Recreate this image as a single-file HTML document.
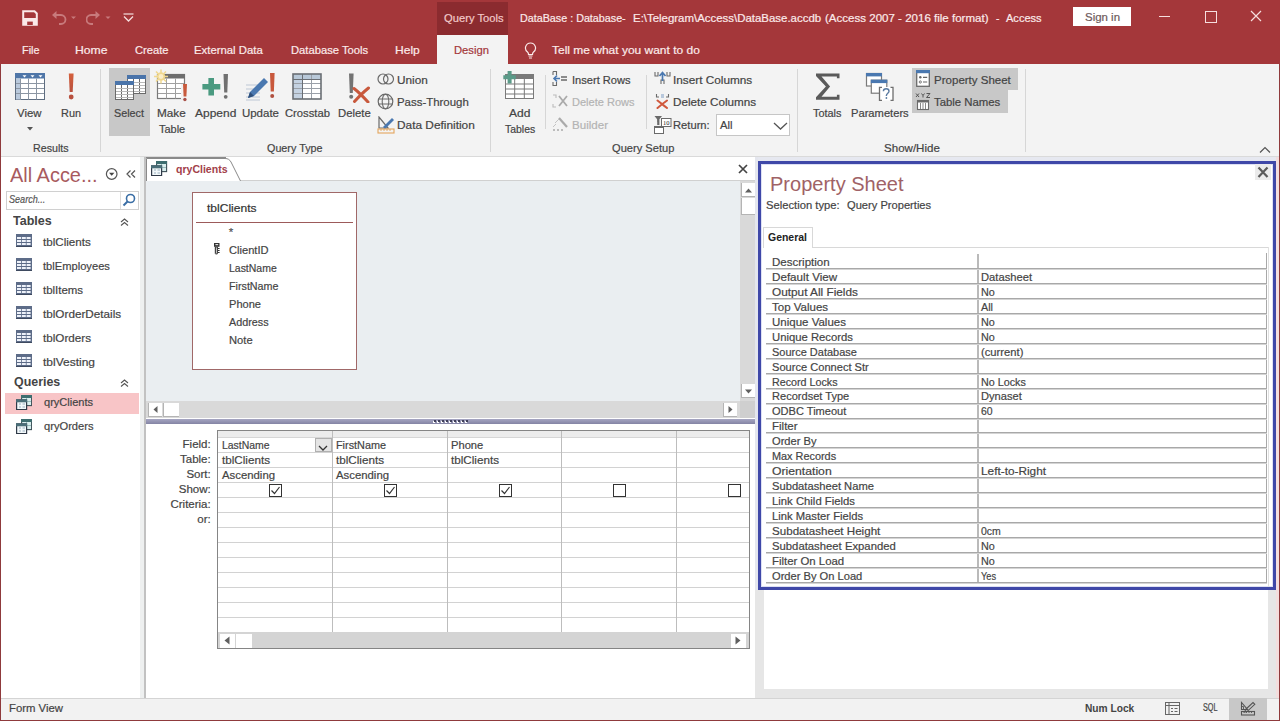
<!DOCTYPE html><html><head><meta charset="utf-8"><style>
html,body{margin:0;padding:0;}
body{width:1280px;height:721px;position:relative;overflow:hidden;background:#fff;font-family:"Liberation Sans",sans-serif;}
body>div,body>svg{position:absolute;}
body>div{-webkit-text-stroke:0.2px currentColor;}
</style></head><body>
<div style="left:0px;top:0px;width:1280px;height:64px;background:#a4373a;"></div>
<div style="left:437px;top:2px;width:71px;height:33px;background:#8b2b2f;"></div>
<svg style="left:22px;top:10px;" width="16" height="16" viewBox="0 0 16 16"><path d="M1.2 1.2h11.3l2.3 2.3v11.3h-13.6z" fill="none" stroke="#fbe9e9" stroke-width="2"/><rect x="1.5" y="8" width="13" height="2" fill="#fbe9e9"/><rect x="1.5" y="10" width="13" height="5" fill="#fbe9e9"/><rect x="5.2" y="11.6" width="5.6" height="3.4" fill="#a4373a"/></svg>
<svg style="left:51px;top:10px;" width="26" height="15" viewBox="0 0 26 15"><path d="M3 5h7a4.5 4.5 0 0 1 0 9h-2" fill="none" stroke="#c87a7c" stroke-width="1.8"/><path d="M1 5l4.5-4v8z" fill="#c87a7c"/><path d="M20 6.5h5l-2.5 2.5z" fill="#c87a7c"/></svg>
<svg style="left:86px;top:10px;" width="26" height="15" viewBox="0 0 26 15"><path d="M12 5h-7a4.5 4.5 0 0 0 0 9h2" fill="none" stroke="#c87a7c" stroke-width="1.8"/><path d="M14 5l-4.5-4v8z" fill="#c87a7c"/><path d="M19.5 6.5h5l-2.5 2.5z" fill="#c87a7c"/></svg>
<svg style="left:123px;top:13px;" width="11" height="9" viewBox="0 0 11 9"><path d="M0.5 1h10" stroke="#f6dede" stroke-width="1.2"/><path d="M1 3.5l4.5 4.5 4.5-4.5" fill="none" stroke="#f6dede" stroke-width="1.3"/></svg>
<div style="left:443.50px;top:10.72px;font-size:11.5px;line-height:14px;color:#f2c9c9;font-weight:normal;font-style:normal;white-space:nowrap;transform-origin:0 0;transform:scaleX(0.9731);">Query Tools</div>
<div style="left:520.20px;top:10.72px;font-size:11.5px;line-height:14px;color:#fbeaea;font-weight:normal;font-style:normal;white-space:nowrap;transform-origin:0 0;transform:scaleX(0.9342);">DataBase : Database-</div>
<div style="left:632.80px;top:10.72px;font-size:11.5px;line-height:14px;color:#fbeaea;font-weight:normal;font-style:normal;white-space:nowrap;transform-origin:0 0;transform:scaleX(0.9942);">E:\Telegram\Access\DataBase.accdb</div>
<div style="left:824.70px;top:10.72px;font-size:11.5px;line-height:14px;color:#fbeaea;font-weight:normal;font-style:normal;white-space:nowrap;transform-origin:0 0;transform:scaleX(1.0031);">(Access 2007 - 2016 file format)</div>
<div style="left:995.50px;top:10.72px;font-size:11.5px;line-height:14px;color:#fbeaea;font-weight:normal;font-style:normal;white-space:nowrap;transform-origin:0 0;transform:scaleX(0.8878);">-</div>
<div style="left:1006.20px;top:10.72px;font-size:11.5px;line-height:14px;color:#fbeaea;font-weight:normal;font-style:normal;white-space:nowrap;transform-origin:0 0;transform:scaleX(0.9605);">Access</div>
<div style="left:1073px;top:7px;width:58px;height:19px;background:#ffffff;"></div>
<div style="left:1085.00px;top:10.22px;font-size:11.5px;line-height:14px;color:#6e5a5a;font-weight:normal;font-style:normal;white-space:nowrap;transform-origin:0 0;transform:scaleX(0.9953);">Sign in</div>
<div style="left:1159px;top:16px;width:11px;height:1.2px;background:#f6dede;"></div>
<div style="left:1204.5px;top:10.5px;width:10px;height:10px;border:1px solid #f6dede;box-sizing:content-box"></div>
<svg style="left:1250px;top:10px;" width="12" height="12" viewBox="0 0 12 12"><path d="M1 1l10 10M11 1L1 11" stroke="#f6dede" stroke-width="1.2"/></svg>
<div style="left:21.50px;top:42.72px;font-size:11.5px;line-height:14px;color:#fbeaea;font-weight:normal;font-style:normal;white-space:nowrap;transform-origin:0 0;transform:scaleX(0.9446);">File</div>
<div style="left:74.50px;top:42.72px;font-size:11.5px;line-height:14px;color:#fbeaea;font-weight:normal;font-style:normal;white-space:nowrap;transform-origin:0 0;transform:scaleX(1.0593);">Home</div>
<div style="left:134.50px;top:42.72px;font-size:11.5px;line-height:14px;color:#fbeaea;font-weight:normal;font-style:normal;white-space:nowrap;transform-origin:0 0;transform:scaleX(0.9707);">Create</div>
<div style="left:194.20px;top:42.72px;font-size:11.5px;line-height:14px;color:#fbeaea;font-weight:normal;font-style:normal;white-space:nowrap;transform-origin:0 0;transform:scaleX(0.9860);">External Data</div>
<div style="left:290.70px;top:42.72px;font-size:11.5px;line-height:14px;color:#fbeaea;font-weight:normal;font-style:normal;white-space:nowrap;transform-origin:0 0;transform:scaleX(0.9764);">Database Tools</div>
<div style="left:395.00px;top:42.72px;font-size:11.5px;line-height:14px;color:#fbeaea;font-weight:normal;font-style:normal;white-space:nowrap;transform-origin:0 0;transform:scaleX(1.0484);">Help</div>
<div style="left:437px;top:35px;width:71px;height:30px;background:#f3f3f3;"></div>
<div style="left:454.00px;top:42.72px;font-size:11.5px;line-height:14px;color:#a4373a;font-weight:normal;font-style:normal;white-space:nowrap;transform-origin:0 0;transform:scaleX(0.9777);">Design</div>
<svg style="left:524px;top:42px;" width="13" height="17" viewBox="0 0 13 17"><path d="M6.5 1a5 5 0 0 0-3 9c.8.7 1 1.5 1 2.5h4c0-1 .2-1.8 1-2.5a5 5 0 0 0-3-9z" fill="none" stroke="#fbeaea" stroke-width="1.2"/><path d="M4.5 14h4M5 16h3" stroke="#fbeaea" stroke-width="1.1"/></svg>
<div style="left:551.60px;top:42.72px;font-size:11.5px;line-height:14px;color:#fbeaea;font-weight:normal;font-style:normal;white-space:nowrap;transform-origin:0 0;transform:scaleX(1.0415);">Tell me what you want to do</div>
<div style="left:0px;top:64px;width:1280px;height:93px;background:#f3f3f3;"></div>
<div style="left:0px;top:156px;width:1280px;height:1px;background:#dadada;"></div>
<svg style="left:15px;top:73px;" width="30" height="27" viewBox="0 0 30 27"><rect x="0.5" y="0.5" width="29" height="26" fill="#fff" stroke="#5e6d80" stroke-width="1"/><rect x="0" y="0" width="30" height="5.5" fill="#4f76a8"/><rect x="1" y="5.5" width="5" height="21" fill="#b9c9dc"/><path d="M5.5 5.5v21M13.5 5.5v21M21.5 5.5v21M1 10.5h28M1 15.5h28M1 20.5h28" stroke="#8c96a3" stroke-width="1"/><path d="M7.5 2.3h4l-2 2.2zM15.5 2.3h4l-2 2.2zM23.5 2.3h4l-2 2.2z" fill="#fff"/></svg>
<div style="left:17.00px;top:105.72px;font-size:11.5px;line-height:14px;color:#444444;font-weight:normal;font-style:normal;white-space:nowrap;transform-origin:0 0;transform:scaleX(0.9900);">View</div>
<svg style="left:27px;top:127px;" width="6" height="4" viewBox="0 0 6 4"><path d="M0 0h6l-3 3.5z" fill="#555"/></svg>
<svg style="left:67px;top:73px;" width="8" height="27" viewBox="0 0 8 27"><defs><linearGradient id="rg" x1="0" y1="0" x2="0" y2="1"><stop offset="0" stop-color="#d4603c"/><stop offset="1" stop-color="#b8503e"/></linearGradient></defs><path d="M1.8 0.5h4.8l-0.9 18.5h-3z" fill="url(#rg)"/><circle cx="4.2" cy="24" r="2.4" fill="#b8503e"/></svg>
<div style="left:61.20px;top:105.72px;font-size:11.5px;line-height:14px;color:#444444;font-weight:normal;font-style:normal;white-space:nowrap;transform-origin:0 0;transform:scaleX(0.9483);">Run</div>
<div style="left:32.60px;top:140.72px;font-size:11.5px;line-height:14px;color:#444444;font-weight:normal;font-style:normal;white-space:nowrap;transform-origin:0 0;transform:scaleX(0.9285);">Results</div>
<div style="left:100px;top:69px;width:1px;height:83px;background:#d6d6d6;"></div>
<div style="left:109px;top:68px;width:41px;height:68px;background:#c8c8c8;"></div>
<svg style="left:127px;top:75px;" width="19" height="19" viewBox="0 0 19 19"><rect x="0.5" y="0.5" width="18" height="18" fill="#fff" stroke="#6a6a6a" stroke-width="1"/><rect x="0" y="0" width="19" height="4" fill="#4a74aa"/><path d="M6.5 4v14M12.5 4v14" stroke="#6a6a6a" stroke-width="1"/><path d="M1 7.5h17M1 10.5h17M1 13.5h17M1 16.5h17" stroke="#b8b8b8" stroke-width="1"/></svg>
<svg style="left:115px;top:81px;" width="19" height="19" viewBox="0 0 19 19"><rect x="0.5" y="0.5" width="18" height="18" fill="#fff" stroke="#6a6a6a" stroke-width="1"/><rect x="0" y="0" width="19" height="4" fill="#4a74aa"/><path d="M6.5 4v14M12.5 4v14" stroke="#6a6a6a" stroke-width="1"/><path d="M1 7.5h17M1 10.5h17M1 13.5h17M1 16.5h17" stroke="#b8b8b8" stroke-width="1"/></svg>
<div style="left:113.80px;top:105.72px;font-size:11.5px;line-height:14px;color:#444444;font-weight:normal;font-style:normal;white-space:nowrap;transform-origin:0 0;transform:scaleX(0.9387);">Select</div>
<svg style="left:152px;top:68px;" width="38" height="36" viewBox="0 0 38 36"><rect x="5.5" y="6.5" width="27" height="24" fill="#fff" stroke="#7a7a7a" stroke-width="1.2"/><rect x="5" y="6" width="28" height="4.5" fill="#6e6e6e"/><path d="M14.5 10.5v20M23.5 10.5v20M6 15.5h26M6 20.5h26M6 25.5h26" stroke="#a0a0a0" stroke-width="1"/><g fill="#f0d890"><circle cx="9" cy="8.5" r="4.2"/></g><path d="M9 1.5v14M2 8.5h14M4 3.5l10 10M14 3.5l-10 10" stroke="#f0d890" stroke-width="1.5"/><circle cx="9" cy="8.5" r="2.4" fill="#fbeec8"/><rect x="29" y="16" width="8" height="15" fill="#f3f3f3"/><path d="M31 16h4l-0.6 12.5h-2.8z" fill="#c85a3c"/><circle cx="32.9" cy="31.5" r="1.7" fill="#a85048"/></svg>
<div style="left:157.00px;top:105.72px;font-size:11.5px;line-height:14px;color:#444444;font-weight:normal;font-style:normal;white-space:nowrap;transform-origin:0 0;transform:scaleX(1.0207);">Make</div>
<div style="left:158.70px;top:121.72px;font-size:11.5px;line-height:14px;color:#444444;font-weight:normal;font-style:normal;white-space:nowrap;transform-origin:0 0;transform:scaleX(0.9528);">Table</div>
<svg style="left:200px;top:72px;" width="30" height="29" viewBox="0 0 30 29"><path d="M8.4 6h5.6v5.9h6.3v5.7h-6.3v5.9h-5.6v-5.9h-6v-5.7h6z" fill="#4a9a80"/><path d="M23.5 2h4.5l-0.7 18.5h-3.1z" fill="#707070"/><circle cx="25.7" cy="24.8" r="1.9" fill="#707070"/></svg>
<div style="left:194.60px;top:105.72px;font-size:11.5px;line-height:14px;color:#444444;font-weight:normal;font-style:normal;white-space:nowrap;transform-origin:0 0;transform:scaleX(1.0416);">Append</div>
<svg style="left:245px;top:72px;" width="32" height="30" viewBox="0 0 32 30"><path d="M1 13h14M1 17h14M1 21h14M1 25h14M1 28h14" stroke="#cfd6df" stroke-width="1.3"/><path d="M3 26l2-6 14-14 4 4-14 14z" fill="#4a78b0"/><path d="M3 26l2-6 4 4z" fill="#2e4f7a"/><path d="M25 1h4.6l-0.7 18.5h-3.2z" fill="#c8583c"/><circle cx="27.2" cy="24" r="2" fill="#b05040"/></svg>
<div style="left:241.90px;top:105.72px;font-size:11.5px;line-height:14px;color:#444444;font-weight:normal;font-style:normal;white-space:nowrap;transform-origin:0 0;">Update</div>
<svg style="left:292px;top:73px;" width="30" height="27" viewBox="0 0 30 27"><rect x="1.5" y="1.5" width="27" height="24" fill="#fff"/><rect x="1" y="1" width="28" height="5" fill="#b8c8d8"/><rect x="1" y="6" width="9.5" height="20" fill="#c4d2e2"/><path d="M10.5 1v25M19.5 1v25M1 10.5h28M1 15.5h28M1 20.5h28" stroke="#9aa0a8" stroke-width="1"/><path d="M1 6.5h28M10.5 1v25" stroke="#6a6e74" stroke-width="1"/><rect x="1" y="1" width="28" height="25" fill="none" stroke="#6a6e74" stroke-width="1.6"/></svg>
<div style="left:284.70px;top:105.72px;font-size:11.5px;line-height:14px;color:#444444;font-weight:normal;font-style:normal;white-space:nowrap;transform-origin:0 0;transform:scaleX(0.9780);">Crosstab</div>
<svg style="left:347px;top:72px;" width="24" height="31" viewBox="0 0 24 31"><path d="M2 1.5h4.6l-0.8 19.5h-3z" fill="#737373"/><circle cx="4.2" cy="24.8" r="2" fill="#737373"/><path d="M7 16.5c4 3 8 7 14 13.5M21.5 16c-5 4-9 8-14 13.5" stroke="#c8583c" stroke-width="3" stroke-linecap="round" fill="none"/></svg>
<div style="left:337.50px;top:105.72px;font-size:11.5px;line-height:14px;color:#444444;font-weight:normal;font-style:normal;white-space:nowrap;transform-origin:0 0;transform:scaleX(0.9866);">Delete</div>
<svg style="left:377px;top:73px;" width="18" height="12" viewBox="0 0 18 12"><circle cx="6" cy="6" r="5" fill="none" stroke="#6a6a6a" stroke-width="1.2"/><circle cx="11.5" cy="6" r="5" fill="none" stroke="#6a6a6a" stroke-width="1.2"/></svg>
<div style="left:397.20px;top:72.72px;font-size:11.5px;line-height:14px;color:#444444;font-weight:normal;font-style:normal;white-space:nowrap;transform-origin:0 0;transform:scaleX(1.0250);">Union</div>
<svg style="left:377px;top:93px;" width="17" height="17" viewBox="0 0 17 17"><circle cx="8.5" cy="8.5" r="7.3" fill="none" stroke="#6a6a6a" stroke-width="1.2"/><ellipse cx="8.5" cy="8.5" rx="3.3" ry="7.3" fill="none" stroke="#6a6a6a" stroke-width="1.1"/><path d="M1.5 6h14M1.5 11h14" stroke="#6a6a6a" stroke-width="1.1"/></svg>
<div style="left:397.20px;top:95.22px;font-size:11.5px;line-height:14px;color:#444444;font-weight:normal;font-style:normal;white-space:nowrap;transform-origin:0 0;transform:scaleX(0.9940);">Pass-Through</div>
<svg style="left:377px;top:116px;" width="18" height="18" viewBox="0 0 18 18"><path d="M2 1v11h9z" fill="none" stroke="#6a6a6a" stroke-width="1.2"/><path d="M6 11l9-9 2 2-9 9z" fill="#4a78b0"/><rect x="1" y="13" width="16" height="4" fill="none" stroke="#e3a55c" stroke-width="1.1"/><path d="M4 13v2M7 13v2M10 13v2M13 13v2" stroke="#e3a55c" stroke-width="0.9"/></svg>
<div style="left:397.20px;top:117.72px;font-size:11.5px;line-height:14px;color:#444444;font-weight:normal;font-style:normal;white-space:nowrap;transform-origin:0 0;transform:scaleX(1.0314);">Data Definition</div>
<div style="left:267.20px;top:140.72px;font-size:11.5px;line-height:14px;color:#444444;font-weight:normal;font-style:normal;white-space:nowrap;transform-origin:0 0;transform:scaleX(0.9369);">Query Type</div>
<div style="left:490px;top:69px;width:1px;height:83px;background:#d6d6d6;"></div>
<svg style="left:503px;top:70px;" width="31" height="29" viewBox="0 0 31 29"><g transform="translate(2,4)"><rect x="0.5" y="0.5" width="28" height="24" fill="#ffffff" stroke="#7a7a7a" stroke-width="1"/><rect x="0" y="0" width="29" height="5" fill="#7a7a7a"/><rect x="0" y="9.50" width="29" height="1" fill="#7a7a7a"/><rect x="0" y="14.50" width="29" height="1" fill="#7a7a7a"/><rect x="0" y="19.50" width="29" height="1" fill="#7a7a7a"/><rect x="9.17" y="5" width="1" height="20" fill="#7a7a7a"/><rect x="18.83" y="5" width="1" height="20" fill="#7a7a7a"/></g><path d="M4.6 1h4v4.3h4.2v4h-4.2v4.2h-4v-4.2h-4.3v-4h4.3z" fill="#5a9a88"/></svg>
<div style="left:508.60px;top:105.72px;font-size:11.5px;line-height:14px;color:#444444;font-weight:normal;font-style:normal;white-space:nowrap;transform-origin:0 0;transform:scaleX(1.0460);">Add</div>
<div style="left:504.60px;top:121.72px;font-size:11.5px;line-height:14px;color:#444444;font-weight:normal;font-style:normal;white-space:nowrap;transform-origin:0 0;transform:scaleX(0.9084);">Tables</div>
<div style="left:545px;top:75px;width:1px;height:54px;background:#d6d6d6;"></div>
<svg style="left:552px;top:70px;" width="16" height="17" viewBox="0 0 16 17"><path d="M1 1.5h3.5v3.5M1 1.5v3.5" fill="none" stroke="#6a6a6a" stroke-width="1.1"/><path d="M1 12v3.5h3.5v-3.5" fill="none" stroke="#6a6a6a" stroke-width="1.1"/><path d="M9 7h6M9 10h6" stroke="#6a6a6a" stroke-width="1.5"/><path d="M2 8.5h6M5 5.5l-3 3 3 3" fill="none" stroke="#4a78b0" stroke-width="1.6"/></svg>
<div style="left:571.80px;top:72.72px;font-size:11.5px;line-height:14px;color:#444444;font-weight:normal;font-style:normal;white-space:nowrap;transform-origin:0 0;transform:scaleX(0.9653);">Insert Rows</div>
<svg style="left:552px;top:93px;" width="16" height="16" viewBox="0 0 16 16"><path d="M1 2h3v3M1 11v3h3" fill="none" stroke="#bbb" stroke-width="1.1"/><path d="M7 3l8 10M15 3L7 13" stroke="#aaa" stroke-width="1.8"/></svg>
<div style="left:571.80px;top:95.22px;font-size:11.5px;line-height:14px;color:#b4b4b4;font-weight:normal;font-style:normal;white-space:nowrap;transform-origin:0 0;transform:scaleX(0.9602);">Delete Rows</div>
<svg style="left:552px;top:116px;" width="16" height="16" viewBox="0 0 16 16"><path d="M7 2l8 9" stroke="#aaa" stroke-width="2.2"/><path d="M3 7l4-4M1 11l3-3" stroke="#c4c4c4" stroke-width="1"/><path d="M1 14h2M5 14h2M9 14h2" stroke="#aaa" stroke-width="1.6"/></svg>
<div style="left:571.80px;top:117.72px;font-size:11.5px;line-height:14px;color:#b4b4b4;font-weight:normal;font-style:normal;white-space:nowrap;transform-origin:0 0;transform:scaleX(1.0056);">Builder</div>
<div style="left:646px;top:75px;width:1px;height:54px;background:#d6d6d6;"></div>
<svg style="left:654px;top:71px;" width="17" height="14" viewBox="0 0 17 14"><path d="M1 1v4h3v-4M13 1v4h3v-4" fill="none" stroke="#6a6a6a" stroke-width="1.1"/><path d="M7 13v-4h3v4" fill="none" stroke="#6a6a6a" stroke-width="1.1"/><path d="M8.5 10v-8M5.5 5l3-3.5 3 3.5" fill="none" stroke="#4a78b0" stroke-width="1.7"/></svg>
<div style="left:673.30px;top:72.72px;font-size:11.5px;line-height:14px;color:#444444;font-weight:normal;font-style:normal;white-space:nowrap;transform-origin:0 0;transform:scaleX(1.0241);">Insert Columns</div>
<svg style="left:654px;top:93px;" width="17" height="16" viewBox="0 0 17 16"><path d="M2.5 1v3h2.5M12 4h2.5v-3" fill="none" stroke="#6a6a6a" stroke-width="1.1"/><rect x="7" y="1" width="3" height="4" fill="#b8c8dc"/><path d="M3.5 7.5c3 2.3 6 4.8 9.5 7.5M13 7.5c-3.5 2.5-6.5 5-9.5 7.5" stroke="#d0583c" stroke-width="2" stroke-linecap="round" fill="none"/></svg>
<div style="left:673.30px;top:95.22px;font-size:11.5px;line-height:14px;color:#444444;font-weight:normal;font-style:normal;white-space:nowrap;transform-origin:0 0;transform:scaleX(1.0170);">Delete Columns</div>
<svg style="left:653px;top:115px;" width="19" height="19" viewBox="0 0 19 19"><path d="M1.5 1h7.5l-2.6 3.2v2.8h-2.3v-2.8z" fill="#6a6a6a"/><rect x="4.2" y="7" width="2.2" height="3" fill="#6a6a6a"/><rect x="8.5" y="3.5" width="9.5" height="8" fill="#fff" stroke="#6a6a6a" stroke-width="1"/><text x="13.3" y="10" font-size="6.5" font-family="Liberation Serif" text-anchor="middle" fill="#222">10</text><rect x="1.5" y="11.5" width="9" height="7" fill="#fff" stroke="#6a6a6a" stroke-width="1"/><rect x="1" y="11" width="10" height="2" fill="#6a6a6a"/></svg>
<div style="left:673.30px;top:117.72px;font-size:11.5px;line-height:14px;color:#444444;font-weight:normal;font-style:normal;white-space:nowrap;transform-origin:0 0;transform:scaleX(0.9733);">Return:</div>
<div style="left:716px;top:113.5px;width:74px;height:22px;background:#fff;border:1px solid #c6c6c6;box-sizing:border-box"></div>
<div style="left:719.50px;top:117.72px;font-size:11.5px;line-height:14px;color:#444444;font-weight:normal;font-style:normal;white-space:nowrap;transform-origin:0 0;transform:scaleX(0.9784);">All</div>
<svg style="left:773px;top:122px;" width="15" height="8" viewBox="0 0 15 8"><path d="M1 1l6.5 6 6.5-6" fill="none" stroke="#555" stroke-width="1.3"/></svg>
<div style="left:612.00px;top:140.72px;font-size:11.5px;line-height:14px;color:#444444;font-weight:normal;font-style:normal;white-space:nowrap;transform-origin:0 0;transform:scaleX(0.9650);">Query Setup</div>
<div style="left:797px;top:69px;width:1px;height:83px;background:#d6d6d6;"></div>
<svg style="left:815px;top:73px;" width="26" height="27" viewBox="0 0 26 27"><path d="M1 0.5h23.5v4.8h-2.6v-1.8h-15.4l8.6 10-8.6 10.3h15.4v-2h2.6v5h-23.5v-2.6l9.9-10.7-9.9-10.6z" fill="#5a5a5a"/></svg>
<div style="left:813.40px;top:105.72px;font-size:11.5px;line-height:14px;color:#444444;font-weight:normal;font-style:normal;white-space:nowrap;transform-origin:0 0;transform:scaleX(0.9488);">Totals</div>
<svg style="left:864px;top:71px;" width="31" height="31" viewBox="0 0 31 31"><rect x="2.5" y="2.5" width="15" height="12.5" fill="#fff" stroke="#7a7a7a" stroke-width="1.2"/><rect x="2" y="2" width="16" height="3.4" fill="#4a78b0"/><rect x="7.3" y="9.2" width="15.5" height="13" fill="#fff" stroke="#7a7a7a" stroke-width="1.2"/><rect x="6.8" y="8.7" width="16.5" height="3.4" fill="#4a78b0"/><rect x="15" y="16" width="14" height="13.5" fill="#fff"/><path d="M18 16.3h-2.5v13h2.5M26.5 16.3h2.5v13h-2.5" fill="none" stroke="#6e6e6e" stroke-width="1.3"/><path d="M19.4 20.3c0-1.6 1.2-2.5 2.8-2.5s2.8 1 2.8 2.5c0 1.8-2.6 2.2-2.6 4.2v0.6" fill="none" stroke="#5a7aa0" stroke-width="1.4"/><circle cx="22.4" cy="27" r="0.9" fill="#5a7aa0"/></svg>
<div style="left:850.90px;top:105.72px;font-size:11.5px;line-height:14px;color:#444444;font-weight:normal;font-style:normal;white-space:nowrap;transform-origin:0 0;transform:scaleX(0.9707);">Parameters</div>
<div style="left:912px;top:68px;width:106px;height:22px;background:#c8c8c8;"></div>
<div style="left:912px;top:90px;width:96px;height:23px;background:#c8c8c8;"></div>
<svg style="left:916px;top:70px;" width="14" height="17" viewBox="0 0 14 17"><rect x="0.7" y="0.7" width="12.6" height="15.6" fill="#fff" stroke="#6a6a6a" stroke-width="1.3"/><rect x="0" y="0" width="14" height="3.2" fill="#4a78b0"/><circle cx="4.3" cy="7.3" r="1.2" fill="#666"/><circle cx="4.3" cy="12" r="1.1" fill="none" stroke="#666" stroke-width="0.9"/><path d="M7 7.3h4.2M7 12h4.2" stroke="#666" stroke-width="1.2"/></svg>
<div style="left:934.10px;top:72.72px;font-size:11.5px;line-height:14px;color:#444444;font-weight:normal;font-style:normal;white-space:nowrap;transform-origin:0 0;">Property Sheet</div>
<svg style="left:915px;top:92px;" width="16" height="19" viewBox="0 0 16 19"><path d="M1 1.5l3 3.5M4 1.5l-3 3.5M6.5 1.5l1.5 2 1.5-2M8 3.5v2M11.5 1.5h3.5l-3.5 4h3.5" fill="none" stroke="#555" stroke-width="1"/><rect x="2.5" y="8.5" width="11" height="9" fill="#fff" stroke="#6a6a6a" stroke-width="1.1"/><rect x="2" y="8" width="12" height="2.5" fill="#6a6a6a"/><path d="M5.5 11v6M8 11v6M10.5 11v6" stroke="#7a7a7a" stroke-width="0.9"/></svg>
<div style="left:934.10px;top:95.22px;font-size:11.5px;line-height:14px;color:#444444;font-weight:normal;font-style:normal;white-space:nowrap;transform-origin:0 0;transform:scaleX(0.9879);">Table Names</div>
<div style="left:883.50px;top:140.72px;font-size:11.5px;line-height:14px;color:#444444;font-weight:normal;font-style:normal;white-space:nowrap;transform-origin:0 0;transform:scaleX(1.0051);">Show/Hide</div>
<div style="left:1025px;top:69px;width:1px;height:83px;background:#d6d6d6;"></div>
<svg style="left:1259px;top:146px;" width="12" height="8" viewBox="0 0 12 8"><path d="M1 6.5l5-5 5 5" fill="none" stroke="#555" stroke-width="1.2"/></svg>
<div style="left:0px;top:157px;width:1280px;height:541px;background:#e6e6e6;"></div>
<div style="left:0px;top:64px;width:1px;height:657px;background:#8f3a3c;"></div>
<div style="left:1279px;top:64px;width:1px;height:657px;background:#8f3a3c;"></div>
<div style="left:0px;top:720px;width:1280px;height:1px;background:#8f3a3c;"></div>
<div style="left:1px;top:157px;width:139px;height:541px;background:#ffffff;"></div>
<div style="left:140px;top:157px;width:4px;height:541px;background:#eef0f0;"></div>
<div style="left:9.90px;top:161.92px;font-size:21px;line-height:25px;color:#a85a5e;font-weight:normal;font-style:normal;white-space:nowrap;transform-origin:0 0;transform:scaleX(0.9500);-webkit-text-stroke:0;">All Acce...</div>
<svg style="left:105px;top:168px;" width="14" height="12" viewBox="0 0 14 12"><circle cx="6.7" cy="6" r="5.3" fill="none" stroke="#555" stroke-width="1.2"/><path d="M4 4.8h5.4l-2.7 3z" fill="#444"/></svg>
<svg style="left:126px;top:170px;" width="10" height="8" viewBox="0 0 10 8"><path d="M4.5 0.5l-3.5 3.5 3.5 3.5M9 0.5l-3.5 3.5 3.5 3.5" fill="none" stroke="#555" stroke-width="1.2"/></svg>
<div style="left:6px;top:191px;width:133px;height:19px;background:#fff;border:1px solid #d0d0d0;box-sizing:border-box"></div>
<div style="left:120px;top:192px;width:1px;height:17px;background:#dedede;"></div>
<svg style="left:122px;top:193px;" width="14" height="14" viewBox="0 0 14 14"><circle cx="8.5" cy="5.5" r="4" fill="none" stroke="#3a6ea5" stroke-width="1.6"/><path d="M5.5 8.5l-4 4" stroke="#3a6ea5" stroke-width="2"/></svg>
<div style="left:9.20px;top:193.39px;font-size:11px;line-height:13px;color:#555;font-weight:normal;font-style:italic;white-space:nowrap;transform-origin:0 0;transform:scaleX(0.8246);">Search...</div>
<div style="left:13.20px;top:213.54px;font-size:12px;line-height:14px;color:#444;font-weight:bold;font-style:normal;white-space:nowrap;transform-origin:0 0;transform:scaleX(1.0450);-webkit-text-stroke:0;">Tables</div>
<svg style="left:120px;top:218px;" width="9" height="8" viewBox="0 0 9 8"><path d="M1 4l3.5-3 3.5 3M1 7.5l3.5-3 3.5 3" fill="none" stroke="#555" stroke-width="1.1"/></svg>
<svg style="left:16px;top:234px;" width="16" height="13" viewBox="0 0 16 13"><rect x="0" y="0" width="16" height="13" fill="#5d6c88"/><rect x="0" y="12" width="16" height="1" fill="#3e4a60"/><g fill="#eef2fa"><rect x="1.0" y="3.0" width="4" height="2"/><rect x="1.0" y="6.0" width="4" height="2"/><rect x="1.0" y="9.0" width="4" height="2"/><rect x="5.8" y="3.0" width="4" height="2"/><rect x="5.8" y="6.0" width="4" height="2"/><rect x="5.8" y="9.0" width="4" height="2"/><rect x="10.6" y="3.0" width="4" height="2"/><rect x="10.6" y="6.0" width="4" height="2"/><rect x="10.6" y="9.0" width="4" height="2"/></g></svg>
<div style="left:43.20px;top:234.72px;font-size:11.5px;line-height:14px;color:#444;font-weight:normal;font-style:normal;white-space:nowrap;transform-origin:0 0;transform:scaleX(1.0106);">tblClients</div>
<svg style="left:16px;top:258px;" width="16" height="13" viewBox="0 0 16 13"><rect x="0" y="0" width="16" height="13" fill="#5d6c88"/><rect x="0" y="12" width="16" height="1" fill="#3e4a60"/><g fill="#eef2fa"><rect x="1.0" y="3.0" width="4" height="2"/><rect x="1.0" y="6.0" width="4" height="2"/><rect x="1.0" y="9.0" width="4" height="2"/><rect x="5.8" y="3.0" width="4" height="2"/><rect x="5.8" y="6.0" width="4" height="2"/><rect x="5.8" y="9.0" width="4" height="2"/><rect x="10.6" y="3.0" width="4" height="2"/><rect x="10.6" y="6.0" width="4" height="2"/><rect x="10.6" y="9.0" width="4" height="2"/></g></svg>
<div style="left:43.20px;top:258.72px;font-size:11.5px;line-height:14px;color:#444;font-weight:normal;font-style:normal;white-space:nowrap;transform-origin:0 0;transform:scaleX(0.9691);">tblEmployees</div>
<svg style="left:16px;top:282px;" width="16" height="13" viewBox="0 0 16 13"><rect x="0" y="0" width="16" height="13" fill="#5d6c88"/><rect x="0" y="12" width="16" height="1" fill="#3e4a60"/><g fill="#eef2fa"><rect x="1.0" y="3.0" width="4" height="2"/><rect x="1.0" y="6.0" width="4" height="2"/><rect x="1.0" y="9.0" width="4" height="2"/><rect x="5.8" y="3.0" width="4" height="2"/><rect x="5.8" y="6.0" width="4" height="2"/><rect x="5.8" y="9.0" width="4" height="2"/><rect x="10.6" y="3.0" width="4" height="2"/><rect x="10.6" y="6.0" width="4" height="2"/><rect x="10.6" y="9.0" width="4" height="2"/></g></svg>
<div style="left:43.20px;top:282.72px;font-size:11.5px;line-height:14px;color:#444;font-weight:normal;font-style:normal;white-space:nowrap;transform-origin:0 0;transform:scaleX(0.9960);">tblItems</div>
<svg style="left:16px;top:306px;" width="16" height="13" viewBox="0 0 16 13"><rect x="0" y="0" width="16" height="13" fill="#5d6c88"/><rect x="0" y="12" width="16" height="1" fill="#3e4a60"/><g fill="#eef2fa"><rect x="1.0" y="3.0" width="4" height="2"/><rect x="1.0" y="6.0" width="4" height="2"/><rect x="1.0" y="9.0" width="4" height="2"/><rect x="5.8" y="3.0" width="4" height="2"/><rect x="5.8" y="6.0" width="4" height="2"/><rect x="5.8" y="9.0" width="4" height="2"/><rect x="10.6" y="3.0" width="4" height="2"/><rect x="10.6" y="6.0" width="4" height="2"/><rect x="10.6" y="9.0" width="4" height="2"/></g></svg>
<div style="left:43.20px;top:306.72px;font-size:11.5px;line-height:14px;color:#444;font-weight:normal;font-style:normal;white-space:nowrap;transform-origin:0 0;transform:scaleX(1.0183);">tblOrderDetails</div>
<svg style="left:16px;top:330px;" width="16" height="13" viewBox="0 0 16 13"><rect x="0" y="0" width="16" height="13" fill="#5d6c88"/><rect x="0" y="12" width="16" height="1" fill="#3e4a60"/><g fill="#eef2fa"><rect x="1.0" y="3.0" width="4" height="2"/><rect x="1.0" y="6.0" width="4" height="2"/><rect x="1.0" y="9.0" width="4" height="2"/><rect x="5.8" y="3.0" width="4" height="2"/><rect x="5.8" y="6.0" width="4" height="2"/><rect x="5.8" y="9.0" width="4" height="2"/><rect x="10.6" y="3.0" width="4" height="2"/><rect x="10.6" y="6.0" width="4" height="2"/><rect x="10.6" y="9.0" width="4" height="2"/></g></svg>
<div style="left:43.20px;top:330.72px;font-size:11.5px;line-height:14px;color:#444;font-weight:normal;font-style:normal;white-space:nowrap;transform-origin:0 0;transform:scaleX(1.0151);">tblOrders</div>
<svg style="left:16px;top:354px;" width="16" height="13" viewBox="0 0 16 13"><rect x="0" y="0" width="16" height="13" fill="#5d6c88"/><rect x="0" y="12" width="16" height="1" fill="#3e4a60"/><g fill="#eef2fa"><rect x="1.0" y="3.0" width="4" height="2"/><rect x="1.0" y="6.0" width="4" height="2"/><rect x="1.0" y="9.0" width="4" height="2"/><rect x="5.8" y="3.0" width="4" height="2"/><rect x="5.8" y="6.0" width="4" height="2"/><rect x="5.8" y="9.0" width="4" height="2"/><rect x="10.6" y="3.0" width="4" height="2"/><rect x="10.6" y="6.0" width="4" height="2"/><rect x="10.6" y="9.0" width="4" height="2"/></g></svg>
<div style="left:43.20px;top:354.72px;font-size:11.5px;line-height:14px;color:#444;font-weight:normal;font-style:normal;white-space:nowrap;transform-origin:0 0;transform:scaleX(1.0428);">tblVesting</div>
<div style="left:13.80px;top:374.54px;font-size:12px;line-height:14px;color:#444;font-weight:bold;font-style:normal;white-space:nowrap;transform-origin:0 0;transform:scaleX(1.0338);-webkit-text-stroke:0;">Queries</div>
<svg style="left:120px;top:379px;" width="9" height="8" viewBox="0 0 9 8"><path d="M1 4l3.5-3 3.5 3M1 7.5l3.5-3 3.5 3" fill="none" stroke="#555" stroke-width="1.1"/></svg>
<div style="left:5px;top:392.5px;width:134px;height:21px;background:#f8c5c7;"></div>
<svg style="left:16px;top:394.7px;" width="16" height="15" viewBox="0 0 16 15"><rect x="5.6" y="0.6" width="10" height="10" fill="#d8eeee" stroke="#3e5058" stroke-width="1.1"/><rect x="5" y="0" width="11" height="3" fill="#3e6e70"/><path d="M10.5 3v7M6 6.5h9" stroke="#8ab0b0" stroke-width="0.8"/><rect x="0.6" y="4.9" width="10" height="9.7" fill="#f2f8fa" stroke="#303a48" stroke-width="1.2"/><rect x="0" y="4.3" width="11" height="3" fill="#4a6e78"/><path d="M3 9h2M3 12h2M6.5 9h2.5M6.5 12h2.5" stroke="#9ab0c0" stroke-width="1"/></svg>
<div style="left:43.80px;top:394.72px;font-size:11.5px;line-height:14px;color:#444;font-weight:normal;font-style:normal;white-space:nowrap;transform-origin:0 0;transform:scaleX(0.9603);">qryClients</div>
<svg style="left:16px;top:418.7px;" width="16" height="15" viewBox="0 0 16 15"><rect x="5.6" y="0.6" width="10" height="10" fill="#d8eeee" stroke="#3e5058" stroke-width="1.1"/><rect x="5" y="0" width="11" height="3" fill="#3e6e70"/><path d="M10.5 3v7M6 6.5h9" stroke="#8ab0b0" stroke-width="0.8"/><rect x="0.6" y="4.9" width="10" height="9.7" fill="#f2f8fa" stroke="#303a48" stroke-width="1.2"/><rect x="0" y="4.3" width="11" height="3" fill="#4a6e78"/><path d="M3 9h2M3 12h2M6.5 9h2.5M6.5 12h2.5" stroke="#9ab0c0" stroke-width="1"/></svg>
<div style="left:43.80px;top:418.72px;font-size:11.5px;line-height:14px;color:#444;font-weight:normal;font-style:normal;white-space:nowrap;transform-origin:0 0;transform:scaleX(0.9684);">qryOrders</div>
<div style="left:144px;top:157px;width:2px;height:541px;background:#c2c2c2;"></div>
<div style="left:146px;top:157px;width:609px;height:541px;background:#ffffff;"></div>
<div style="left:146px;top:180px;width:609px;height:1px;background:#d0d0d0;"></div>
<svg style="left:146px;top:157px;" width="100" height="25" viewBox="0 0 100 25"><path d="M0.5 24V1.5h78.5c3 0 4.5 1 6 3.5l9.5 19" fill="#fff" stroke="#8a8a8a" stroke-width="1"/></svg>
<div style="left:146px;top:157px;width:80px;height:1px;background:#8a8a8a;"></div>
<svg style="left:151px;top:161px;" width="17" height="15" viewBox="0 0 17 15"><rect x="5.6" y="0.6" width="10" height="10" fill="#d8eeee" stroke="#3e5058" stroke-width="1.1"/><rect x="5" y="0" width="11" height="3" fill="#3e6e70"/><path d="M10.5 3v7M6 6.5h9" stroke="#8ab0b0" stroke-width="0.8"/><rect x="0.6" y="4.9" width="10" height="9.7" fill="#f2f8fa" stroke="#303a48" stroke-width="1.2"/><rect x="0" y="4.3" width="11" height="3" fill="#4a6e78"/><path d="M3 9h2M3 12h2M6.5 9h2.5M6.5 12h2.5" stroke="#9ab0c0" stroke-width="1"/></svg>
<div style="left:175.50px;top:161.72px;font-size:11.5px;line-height:14px;color:#a2404a;font-weight:bold;font-style:normal;white-space:nowrap;transform-origin:0 0;transform:scaleX(0.9158);-webkit-text-stroke:0;">qryClients</div>
<svg style="left:738px;top:164px;" width="10" height="10" viewBox="0 0 10 10"><path d="M1 1l8 8M9 1l-8 8" stroke="#444" stroke-width="1.7"/></svg>
<div style="left:146px;top:181px;width:609px;height:220px;background:#eaeef1;"></div>
<div style="left:192px;top:192px;width:165px;height:178px;background:#fff;border:1px solid #a06868;box-sizing:border-box"></div>
<div style="left:196px;top:222px;width:157px;height:1px;background:#9c5a5a;"></div>
<div style="left:206.50px;top:201.02px;font-size:11.5px;line-height:14px;color:#333;font-weight:normal;font-style:normal;white-space:nowrap;transform-origin:0 0;transform:scaleX(1.0465);">tblClients</div>
<div style="left:228.70px;top:225.22px;font-size:11.5px;line-height:14px;color:#555;font-weight:normal;font-style:normal;white-space:nowrap;transform-origin:0 0;">*</div>
<svg style="left:213px;top:242px;" width="8" height="13" viewBox="0 0 8 13"><rect x="1" y="1" width="5.5" height="3.8" fill="#333"/><rect x="2.4" y="2" width="2.8" height="1.2" fill="#ddd"/><rect x="1.8" y="4.8" width="3.2" height="7" fill="#444"/><rect x="3" y="5.5" width="0.9" height="5.5" fill="#ccc"/><path d="M5 6.5h1.6M5 8.5h1.6M5 10.5h1.6" stroke="#333" stroke-width="1"/><rect x="2.5" y="11.8" width="1.8" height="0.8" fill="#777"/></svg>
<div style="left:228.90px;top:242.92px;font-size:11.5px;line-height:14px;color:#444;font-weight:normal;font-style:normal;white-space:nowrap;transform-origin:0 0;transform:scaleX(0.9681);">ClientID</div>
<div style="left:228.90px;top:260.92px;font-size:11.5px;line-height:14px;color:#444;font-weight:normal;font-style:normal;white-space:nowrap;transform-origin:0 0;transform:scaleX(0.9100);">LastName</div>
<div style="left:228.90px;top:278.92px;font-size:11.5px;line-height:14px;color:#444;font-weight:normal;font-style:normal;white-space:nowrap;transform-origin:0 0;transform:scaleX(0.9335);">FirstName</div>
<div style="left:228.90px;top:296.92px;font-size:11.5px;line-height:14px;color:#444;font-weight:normal;font-style:normal;white-space:nowrap;transform-origin:0 0;transform:scaleX(0.9622);">Phone</div>
<div style="left:228.90px;top:314.92px;font-size:11.5px;line-height:14px;color:#444;font-weight:normal;font-style:normal;white-space:nowrap;transform-origin:0 0;transform:scaleX(0.9388);">Address</div>
<div style="left:228.90px;top:332.92px;font-size:11.5px;line-height:14px;color:#444;font-weight:normal;font-style:normal;white-space:nowrap;transform-origin:0 0;transform:scaleX(0.9717);">Note</div>
<div style="left:740px;top:181px;width:15px;height:220px;background:#d9d9d9;"></div>
<div style="left:741px;top:183px;width:14px;height:14px;background:#fff;border-left:1px solid #b4b4b4;border-bottom:1px solid #b4b4b4;box-sizing:border-box"></div>
<svg style="left:744.5px;top:188px;" width="8" height="5" viewBox="0 0 8 5"><path d="M0 4.5h7l-3.5-4z" fill="#606060"/></svg>
<div style="left:741px;top:198px;width:14px;height:17px;background:#fff;border-left:1px solid #b4b4b4;border-bottom:1px solid #b4b4b4;box-sizing:border-box"></div>
<div style="left:741px;top:384px;width:14px;height:14px;background:#fff;border-left:1px solid #b4b4b4;border-bottom:1px solid #b4b4b4;box-sizing:border-box"></div>
<svg style="left:744.5px;top:389px;" width="8" height="5" viewBox="0 0 8 5"><path d="M0 0.5h7l-3.5 4z" fill="#606060"/></svg>
<div style="left:146px;top:401px;width:594px;height:17px;background:#d9d9d9;"></div>
<div style="left:148px;top:403px;width:14px;height:14px;background:#fff;border-left:1px solid #b4b4b4;border-bottom:1px solid #b4b4b4;box-sizing:border-box"></div>
<svg style="left:152.5px;top:406px;" width="5" height="8" viewBox="0 0 5 8"><path d="M4.5 0v7l-4-3.5z" fill="#606060"/></svg>
<div style="left:163px;top:403px;width:16px;height:14px;background:#fff;border-left:1px solid #b4b4b4;border-bottom:1px solid #b4b4b4;box-sizing:border-box"></div>
<div style="left:723px;top:403px;width:14px;height:14px;background:#fff;border-left:1px solid #b4b4b4;border-bottom:1px solid #b4b4b4;box-sizing:border-box"></div>
<svg style="left:728px;top:406px;" width="5" height="8" viewBox="0 0 5 8"><path d="M0.5 0v7l4-3.5z" fill="#606060"/></svg>
<div style="left:740px;top:401px;width:15px;height:17px;background:#cfcfcf;"></div>
<div style="left:146px;top:419px;width:609px;height:5px;background:linear-gradient(#a6a6c2,#8484a4)"></div>
<svg style="left:432px;top:419px;" width="37" height="5" viewBox="0 0 37 5"><rect x="1" y="2" width="2" height="2" fill="#fff"/><rect x="2" y="1" width="2" height="2" fill="#40405a"/><rect x="5" y="2" width="2" height="2" fill="#fff"/><rect x="6" y="1" width="2" height="2" fill="#40405a"/><rect x="9" y="2" width="2" height="2" fill="#fff"/><rect x="10" y="1" width="2" height="2" fill="#40405a"/><rect x="13" y="2" width="2" height="2" fill="#fff"/><rect x="14" y="1" width="2" height="2" fill="#40405a"/><rect x="17" y="2" width="2" height="2" fill="#fff"/><rect x="18" y="1" width="2" height="2" fill="#40405a"/><rect x="21" y="2" width="2" height="2" fill="#fff"/><rect x="22" y="1" width="2" height="2" fill="#40405a"/><rect x="25" y="2" width="2" height="2" fill="#fff"/><rect x="26" y="1" width="2" height="2" fill="#40405a"/><rect x="29" y="2" width="2" height="2" fill="#fff"/><rect x="30" y="1" width="2" height="2" fill="#40405a"/><rect x="33" y="2" width="2" height="2" fill="#fff"/><rect x="34" y="1" width="2" height="2" fill="#40405a"/></svg>
<div style="left:182.58px;top:437.22px;font-size:11.5px;line-height:14px;color:#444;font-weight:normal;font-style:normal;white-space:nowrap;transform-origin:0 0;">Field:</div>
<div style="left:180.02px;top:452.22px;font-size:11.5px;line-height:14px;color:#444;font-weight:normal;font-style:normal;white-space:nowrap;transform-origin:0 0;">Table:</div>
<div style="left:186.41px;top:467.22px;font-size:11.5px;line-height:14px;color:#444;font-weight:normal;font-style:normal;white-space:nowrap;transform-origin:0 0;">Sort:</div>
<div style="left:178.74px;top:482.22px;font-size:11.5px;line-height:14px;color:#444;font-weight:normal;font-style:normal;white-space:nowrap;transform-origin:0 0;">Show:</div>
<div style="left:170.44px;top:497.22px;font-size:11.5px;line-height:14px;color:#444;font-weight:normal;font-style:normal;white-space:nowrap;transform-origin:0 0;">Criteria:</div>
<div style="left:197.28px;top:512.22px;font-size:11.5px;line-height:14px;color:#444;font-weight:normal;font-style:normal;white-space:nowrap;transform-origin:0 0;">or:</div>
<div style="left:217px;top:430px;width:533px;height:219px;background:#fff;border:1px solid #858585;box-sizing:border-box"></div>
<div style="left:218px;top:431px;width:531px;height:6.5px;background:#ececec;"></div>
<div style="left:218px;top:452px;width:531px;height:1px;background:#d2d2d2;"></div>
<div style="left:218px;top:467px;width:531px;height:1px;background:#d2d2d2;"></div>
<div style="left:218px;top:482px;width:531px;height:1px;background:#d2d2d2;"></div>
<div style="left:218px;top:497px;width:531px;height:1px;background:#d2d2d2;"></div>
<div style="left:218px;top:512px;width:531px;height:1px;background:#d2d2d2;"></div>
<div style="left:218px;top:527px;width:531px;height:1px;background:#d2d2d2;"></div>
<div style="left:218px;top:542px;width:531px;height:1px;background:#d2d2d2;"></div>
<div style="left:218px;top:557px;width:531px;height:1px;background:#d2d2d2;"></div>
<div style="left:218px;top:572px;width:531px;height:1px;background:#d2d2d2;"></div>
<div style="left:218px;top:587px;width:531px;height:1px;background:#d2d2d2;"></div>
<div style="left:218px;top:602px;width:531px;height:1px;background:#d2d2d2;"></div>
<div style="left:218px;top:617px;width:531px;height:1px;background:#d2d2d2;"></div>
<div style="left:218px;top:437px;width:531px;height:1px;background:#d6d6d6;"></div>
<div style="left:332px;top:431px;width:1px;height:201px;background:#bdbdbd;"></div>
<div style="left:447px;top:431px;width:1px;height:201px;background:#bdbdbd;"></div>
<div style="left:561px;top:431px;width:1px;height:201px;background:#bdbdbd;"></div>
<div style="left:676px;top:431px;width:1px;height:201px;background:#bdbdbd;"></div>
<div style="left:221.60px;top:437.72px;font-size:11.5px;line-height:14px;color:#444;font-weight:normal;font-style:normal;white-space:nowrap;transform-origin:0 0;transform:scaleX(0.9081);">LastName</div>
<div style="left:221.60px;top:452.72px;font-size:11.5px;line-height:14px;color:#444;font-weight:normal;font-style:normal;white-space:nowrap;transform-origin:0 0;transform:scaleX(1.0148);">tblClients</div>
<div style="left:221.60px;top:467.72px;font-size:11.5px;line-height:14px;color:#444;font-weight:normal;font-style:normal;white-space:nowrap;transform-origin:0 0;transform:scaleX(0.9869);">Ascending</div>
<div style="left:336.30px;top:437.72px;font-size:11.5px;line-height:14px;color:#444;font-weight:normal;font-style:normal;white-space:nowrap;transform-origin:0 0;transform:scaleX(0.9429);">FirstName</div>
<div style="left:336.30px;top:452.72px;font-size:11.5px;line-height:14px;color:#444;font-weight:normal;font-style:normal;white-space:nowrap;transform-origin:0 0;transform:scaleX(1.0148);">tblClients</div>
<div style="left:336.30px;top:467.72px;font-size:11.5px;line-height:14px;color:#444;font-weight:normal;font-style:normal;white-space:nowrap;transform-origin:0 0;transform:scaleX(0.9869);">Ascending</div>
<div style="left:451.00px;top:437.72px;font-size:11.5px;line-height:14px;color:#444;font-weight:normal;font-style:normal;white-space:nowrap;transform-origin:0 0;transform:scaleX(0.9712);">Phone</div>
<div style="left:451.00px;top:452.72px;font-size:11.5px;line-height:14px;color:#444;font-weight:normal;font-style:normal;white-space:nowrap;transform-origin:0 0;transform:scaleX(1.0148);">tblClients</div>
<div style="left:315px;top:438px;width:17px;height:14px;background:#e4e4e4;border:1px solid #b0b0b0;box-sizing:border-box"></div>
<svg style="left:318px;top:445px;" width="10" height="6" viewBox="0 0 10 6"><path d="M1 1l4 4 4-4" fill="none" stroke="#333" stroke-width="1.3"/></svg>
<svg style="left:269.0px;top:484px;" width="13" height="13" viewBox="0 0 13 13"><rect x="0.5" y="0.5" width="12" height="12" fill="#fff" stroke="#333" stroke-width="1"/><path d="M2.5 6.5l3 3 5-6.5" fill="none" stroke="#333" stroke-width="1.2"/></svg>
<svg style="left:383.5px;top:484px;" width="13" height="13" viewBox="0 0 13 13"><rect x="0.5" y="0.5" width="12" height="12" fill="#fff" stroke="#333" stroke-width="1"/><path d="M2.5 6.5l3 3 5-6.5" fill="none" stroke="#333" stroke-width="1.2"/></svg>
<svg style="left:498.5px;top:484px;" width="13" height="13" viewBox="0 0 13 13"><rect x="0.5" y="0.5" width="12" height="12" fill="#fff" stroke="#333" stroke-width="1"/><path d="M2.5 6.5l3 3 5-6.5" fill="none" stroke="#333" stroke-width="1.2"/></svg>
<svg style="left:613.0px;top:484px;" width="13" height="13" viewBox="0 0 13 13"><rect x="0.5" y="0.5" width="12" height="12" fill="#fff" stroke="#333" stroke-width="1"/></svg>
<svg style="left:728.0px;top:484px;" width="13" height="13" viewBox="0 0 13 13"><rect x="0.5" y="0.5" width="12" height="12" fill="#fff" stroke="#333" stroke-width="1"/></svg>
<div style="left:218px;top:632px;width:531px;height:16px;background:#d4d4d4;"></div>
<div style="left:220px;top:633.5px;width:15px;height:14px;background:#ffffff;"></div>
<svg style="left:224px;top:636px;" width="6" height="9" viewBox="0 0 6 9"><path d="M5.5 0.5v8l-5-4z" fill="#606060"/></svg>
<div style="left:236px;top:633.5px;width:16px;height:14px;background:#ffffff;"></div>
<div style="left:731px;top:633.5px;width:15px;height:14px;background:#ffffff;"></div>
<svg style="left:735px;top:636px;" width="6" height="9" viewBox="0 0 6 9"><path d="M0.5 0.5v8l5-4z" fill="#606060"/></svg>
<div style="left:755px;top:157px;width:3px;height:541px;background:#e4e6ee;"></div>
<div style="left:758px;top:157px;width:521px;height:4px;background:#e6e8f0;"></div>
<div style="left:758px;top:161px;width:518px;height:537px;background:#ffffff;"></div>
<div style="left:755px;top:590px;width:9px;height:108px;background:#e6e6e6;"></div>
<div style="left:1268px;top:590px;width:11px;height:108px;background:#e6e6e6;"></div>
<div style="left:758px;top:689px;width:521px;height:9px;background:#e6e6e6;"></div>
<div style="left:758px;top:161px;width:518px;height:429px;border:3px solid #3f48a8;box-sizing:border-box;box-shadow:inset 0 0 0 1px #dde0f4"></div>
<div style="left:1276px;top:157px;width:3px;height:541px;background:#f3dede;"></div>
<div style="left:769.50px;top:170.92px;font-size:21px;line-height:25px;color:#a06266;font-weight:normal;font-style:normal;white-space:nowrap;transform-origin:0 0;transform:scaleX(0.9531);-webkit-text-stroke:0;">Property Sheet</div>
<svg style="left:1255px;top:164px;" width="16" height="16" viewBox="0 0 16 16"><rect x="0" y="0" width="16" height="16" fill="#ebebeb"/><path d="M3.5 3.5l9 9.5M12.5 3.5l-9 9.5" stroke="#5a5a5a" stroke-width="2.2"/></svg>
<div style="left:766.30px;top:197.72px;font-size:11.5px;line-height:14px;color:#444;font-weight:normal;font-style:normal;white-space:nowrap;transform-origin:0 0;transform:scaleX(0.9756);">Selection type:</div>
<div style="left:847.30px;top:197.72px;font-size:11.5px;line-height:14px;color:#444;font-weight:normal;font-style:normal;white-space:nowrap;transform-origin:0 0;transform:scaleX(0.9675);">Query Properties</div>
<div style="left:763px;top:227px;width:50px;height:21px;background:#fff;border:1px solid #d8d8d8;border-bottom:none;box-sizing:border-box"></div>
<div style="left:812px;top:247px;width:457px;height:1px;background:#d8d8d8;"></div>
<div style="left:1268px;top:247px;width:1px;height:340px;background:#e0e0e0;"></div>
<div style="left:768.30px;top:229.72px;font-size:11.5px;line-height:14px;color:#222;font-weight:bold;font-style:normal;white-space:nowrap;transform-origin:0 0;transform:scaleX(0.9107);-webkit-text-stroke:0;">General</div>
<div style="left:977px;top:254px;width:2px;height:329px;background:#bababa;"></div>
<div style="left:1265.5px;top:253px;width:1.5px;height:330px;background:#a8a8a8;"></div>
<div style="left:772.00px;top:254.92px;font-size:11.5px;line-height:14px;color:#444;font-weight:normal;font-style:normal;white-space:nowrap;transform-origin:0 0;transform:scaleX(1.0031);">Description</div>
<div style="left:766px;top:268px;width:501px;height:1px;background:#a8a8a8;"></div>
<div style="left:766px;top:269px;width:501px;height:1px;background:#d4d4d4;"></div>
<div style="left:772.00px;top:269.87px;font-size:11.5px;line-height:14px;color:#444;font-weight:normal;font-style:normal;white-space:nowrap;transform-origin:0 0;transform:scaleX(1.0126);">Default View</div>
<div style="left:980.60px;top:269.87px;font-size:11.5px;line-height:14px;color:#444;font-weight:normal;font-style:normal;white-space:nowrap;transform-origin:0 0;transform:scaleX(0.9728);">Datasheet</div>
<div style="left:766px;top:283px;width:501px;height:1px;background:#a8a8a8;"></div>
<div style="left:766px;top:284px;width:501px;height:1px;background:#d4d4d4;"></div>
<div style="left:772.00px;top:284.82px;font-size:11.5px;line-height:14px;color:#444;font-weight:normal;font-style:normal;white-space:nowrap;transform-origin:0 0;transform:scaleX(1.0259);">Output All Fields</div>
<div style="left:980.60px;top:284.82px;font-size:11.5px;line-height:14px;color:#444;font-weight:normal;font-style:normal;white-space:nowrap;transform-origin:0 0;transform:scaleX(0.9390);">No</div>
<div style="left:766px;top:298px;width:501px;height:1px;background:#a8a8a8;"></div>
<div style="left:766px;top:299px;width:501px;height:1px;background:#d4d4d4;"></div>
<div style="left:772.00px;top:299.77px;font-size:11.5px;line-height:14px;color:#444;font-weight:normal;font-style:normal;white-space:nowrap;transform-origin:0 0;">Top Values</div>
<div style="left:980.60px;top:299.77px;font-size:11.5px;line-height:14px;color:#444;font-weight:normal;font-style:normal;white-space:nowrap;transform-origin:0 0;transform:scaleX(0.9392);">All</div>
<div style="left:766px;top:313px;width:501px;height:1px;background:#a8a8a8;"></div>
<div style="left:766px;top:314px;width:501px;height:1px;background:#d4d4d4;"></div>
<div style="left:772.00px;top:314.72px;font-size:11.5px;line-height:14px;color:#444;font-weight:normal;font-style:normal;white-space:nowrap;transform-origin:0 0;">Unique Values</div>
<div style="left:980.60px;top:314.72px;font-size:11.5px;line-height:14px;color:#444;font-weight:normal;font-style:normal;white-space:nowrap;transform-origin:0 0;transform:scaleX(0.9390);">No</div>
<div style="left:766px;top:328px;width:501px;height:1px;background:#a8a8a8;"></div>
<div style="left:766px;top:329px;width:501px;height:1px;background:#d4d4d4;"></div>
<div style="left:772.00px;top:329.67px;font-size:11.5px;line-height:14px;color:#444;font-weight:normal;font-style:normal;white-space:nowrap;transform-origin:0 0;transform:scaleX(0.9811);">Unique Records</div>
<div style="left:980.60px;top:329.67px;font-size:11.5px;line-height:14px;color:#444;font-weight:normal;font-style:normal;white-space:nowrap;transform-origin:0 0;transform:scaleX(0.9390);">No</div>
<div style="left:766px;top:343px;width:501px;height:1px;background:#a8a8a8;"></div>
<div style="left:766px;top:344px;width:501px;height:1px;background:#d4d4d4;"></div>
<div style="left:772.00px;top:344.62px;font-size:11.5px;line-height:14px;color:#444;font-weight:normal;font-style:normal;white-space:nowrap;transform-origin:0 0;transform:scaleX(0.9554);">Source Database</div>
<div style="left:980.60px;top:344.62px;font-size:11.5px;line-height:14px;color:#444;font-weight:normal;font-style:normal;white-space:nowrap;transform-origin:0 0;transform:scaleX(0.9759);">(current)</div>
<div style="left:766px;top:358px;width:501px;height:1px;background:#a8a8a8;"></div>
<div style="left:766px;top:359px;width:501px;height:1px;background:#d4d4d4;"></div>
<div style="left:772.00px;top:359.57px;font-size:11.5px;line-height:14px;color:#444;font-weight:normal;font-style:normal;white-space:nowrap;transform-origin:0 0;transform:scaleX(0.9645);">Source Connect Str</div>
<div style="left:766px;top:373px;width:501px;height:1px;background:#a8a8a8;"></div>
<div style="left:766px;top:374px;width:501px;height:1px;background:#d4d4d4;"></div>
<div style="left:772.00px;top:374.52px;font-size:11.5px;line-height:14px;color:#444;font-weight:normal;font-style:normal;white-space:nowrap;transform-origin:0 0;transform:scaleX(0.9330);">Record Locks</div>
<div style="left:980.60px;top:374.52px;font-size:11.5px;line-height:14px;color:#444;font-weight:normal;font-style:normal;white-space:nowrap;transform-origin:0 0;transform:scaleX(0.9347);">No Locks</div>
<div style="left:766px;top:388px;width:501px;height:1px;background:#a8a8a8;"></div>
<div style="left:766px;top:389px;width:501px;height:1px;background:#d4d4d4;"></div>
<div style="left:772.00px;top:389.47px;font-size:11.5px;line-height:14px;color:#444;font-weight:normal;font-style:normal;white-space:nowrap;transform-origin:0 0;transform:scaleX(0.9611);">Recordset Type</div>
<div style="left:980.60px;top:389.47px;font-size:11.5px;line-height:14px;color:#444;font-weight:normal;font-style:normal;white-space:nowrap;transform-origin:0 0;transform:scaleX(0.9672);">Dynaset</div>
<div style="left:766px;top:403px;width:501px;height:1px;background:#a8a8a8;"></div>
<div style="left:766px;top:404px;width:501px;height:1px;background:#d4d4d4;"></div>
<div style="left:772.00px;top:404.42px;font-size:11.5px;line-height:14px;color:#444;font-weight:normal;font-style:normal;white-space:nowrap;transform-origin:0 0;transform:scaleX(0.9609);">ODBC Timeout</div>
<div style="left:980.60px;top:404.42px;font-size:11.5px;line-height:14px;color:#444;font-weight:normal;font-style:normal;white-space:nowrap;transform-origin:0 0;transform:scaleX(0.9071);">60</div>
<div style="left:766px;top:418px;width:501px;height:1px;background:#a8a8a8;"></div>
<div style="left:766px;top:419px;width:501px;height:1px;background:#d4d4d4;"></div>
<div style="left:772.00px;top:419.37px;font-size:11.5px;line-height:14px;color:#444;font-weight:normal;font-style:normal;white-space:nowrap;transform-origin:0 0;">Filter</div>
<div style="left:766px;top:432px;width:501px;height:1px;background:#a8a8a8;"></div>
<div style="left:766px;top:433px;width:501px;height:1px;background:#d4d4d4;"></div>
<div style="left:772.00px;top:434.32px;font-size:11.5px;line-height:14px;color:#444;font-weight:normal;font-style:normal;white-space:nowrap;transform-origin:0 0;transform:scaleX(0.9671);">Order By</div>
<div style="left:766px;top:447px;width:501px;height:1px;background:#a8a8a8;"></div>
<div style="left:766px;top:448px;width:501px;height:1px;background:#d4d4d4;"></div>
<div style="left:772.00px;top:449.27px;font-size:11.5px;line-height:14px;color:#444;font-weight:normal;font-style:normal;white-space:nowrap;transform-origin:0 0;transform:scaleX(0.9462);">Max Records</div>
<div style="left:766px;top:462px;width:501px;height:1px;background:#a8a8a8;"></div>
<div style="left:766px;top:463px;width:501px;height:1px;background:#d4d4d4;"></div>
<div style="left:772.00px;top:464.22px;font-size:11.5px;line-height:14px;color:#444;font-weight:normal;font-style:normal;white-space:nowrap;transform-origin:0 0;transform:scaleX(1.0612);">Orientation</div>
<div style="left:980.60px;top:464.22px;font-size:11.5px;line-height:14px;color:#444;font-weight:normal;font-style:normal;white-space:nowrap;transform-origin:0 0;transform:scaleX(1.0273);">Left-to-Right</div>
<div style="left:766px;top:477px;width:501px;height:1px;background:#a8a8a8;"></div>
<div style="left:766px;top:478px;width:501px;height:1px;background:#d4d4d4;"></div>
<div style="left:772.00px;top:479.17px;font-size:11.5px;line-height:14px;color:#444;font-weight:normal;font-style:normal;white-space:nowrap;transform-origin:0 0;transform:scaleX(0.9719);">Subdatasheet Name</div>
<div style="left:766px;top:492px;width:501px;height:1px;background:#a8a8a8;"></div>
<div style="left:766px;top:493px;width:501px;height:1px;background:#d4d4d4;"></div>
<div style="left:772.00px;top:494.12px;font-size:11.5px;line-height:14px;color:#444;font-weight:normal;font-style:normal;white-space:nowrap;transform-origin:0 0;transform:scaleX(0.9838);">Link Child Fields</div>
<div style="left:766px;top:507px;width:501px;height:1px;background:#a8a8a8;"></div>
<div style="left:766px;top:508px;width:501px;height:1px;background:#d4d4d4;"></div>
<div style="left:772.00px;top:509.07px;font-size:11.5px;line-height:14px;color:#444;font-weight:normal;font-style:normal;white-space:nowrap;transform-origin:0 0;transform:scaleX(0.9763);">Link Master Fields</div>
<div style="left:766px;top:522px;width:501px;height:1px;background:#a8a8a8;"></div>
<div style="left:766px;top:523px;width:501px;height:1px;background:#d4d4d4;"></div>
<div style="left:772.00px;top:524.02px;font-size:11.5px;line-height:14px;color:#444;font-weight:normal;font-style:normal;white-space:nowrap;transform-origin:0 0;transform:scaleX(1.0083);">Subdatasheet Height</div>
<div style="left:980.60px;top:524.02px;font-size:11.5px;line-height:14px;color:#444;font-weight:normal;font-style:normal;white-space:nowrap;transform-origin:0 0;transform:scaleX(0.9115);">0cm</div>
<div style="left:766px;top:537px;width:501px;height:1px;background:#a8a8a8;"></div>
<div style="left:766px;top:538px;width:501px;height:1px;background:#d4d4d4;"></div>
<div style="left:772.00px;top:538.97px;font-size:11.5px;line-height:14px;color:#444;font-weight:normal;font-style:normal;white-space:nowrap;transform-origin:0 0;transform:scaleX(0.9828);">Subdatasheet Expanded</div>
<div style="left:980.60px;top:538.97px;font-size:11.5px;line-height:14px;color:#444;font-weight:normal;font-style:normal;white-space:nowrap;transform-origin:0 0;transform:scaleX(0.9390);">No</div>
<div style="left:766px;top:552px;width:501px;height:1px;background:#a8a8a8;"></div>
<div style="left:766px;top:553px;width:501px;height:1px;background:#d4d4d4;"></div>
<div style="left:772.00px;top:553.92px;font-size:11.5px;line-height:14px;color:#444;font-weight:normal;font-style:normal;white-space:nowrap;transform-origin:0 0;transform:scaleX(0.9909);">Filter On Load</div>
<div style="left:980.60px;top:553.92px;font-size:11.5px;line-height:14px;color:#444;font-weight:normal;font-style:normal;white-space:nowrap;transform-origin:0 0;transform:scaleX(0.9390);">No</div>
<div style="left:766px;top:567px;width:501px;height:1px;background:#a8a8a8;"></div>
<div style="left:766px;top:568px;width:501px;height:1px;background:#d4d4d4;"></div>
<div style="left:772.00px;top:568.87px;font-size:11.5px;line-height:14px;color:#444;font-weight:normal;font-style:normal;white-space:nowrap;transform-origin:0 0;transform:scaleX(0.9676);">Order By On Load</div>
<div style="left:980.60px;top:568.87px;font-size:11.5px;line-height:14px;color:#444;font-weight:normal;font-style:normal;white-space:nowrap;transform-origin:0 0;transform:scaleX(0.8051);">Yes</div>
<div style="left:766px;top:582px;width:501px;height:1px;background:#a8a8a8;"></div>
<div style="left:766px;top:583px;width:501px;height:1px;background:#d4d4d4;"></div>
<div style="left:1px;top:698px;width:1278px;height:22px;background:#f2f2f2;"></div>
<div style="left:1px;top:698px;width:1278px;height:1px;background:#d4d4d4;"></div>
<div style="left:9.00px;top:701.22px;font-size:11.5px;line-height:14px;color:#444;font-weight:normal;font-style:normal;white-space:nowrap;transform-origin:0 0;transform:scaleX(0.9859);">Form View</div>
<div style="left:1085.00px;top:701.22px;font-size:11.5px;line-height:14px;color:#444;font-weight:bold;font-style:normal;white-space:nowrap;transform-origin:0 0;transform:scaleX(0.8865);-webkit-text-stroke:0;">Num Lock</div>
<svg style="left:1165px;top:702px;" width="15" height="13" viewBox="0 0 15 13"><rect x="0.5" y="0.5" width="14" height="12" fill="none" stroke="#666" stroke-width="1"/><path d="M4 0.5v12M0.5 3.5h14" stroke="#666" stroke-width="1"/><path d="M6 6.5h2M9.5 6.5h3M6 9.5h2M9.5 9.5h3" stroke="#666" stroke-width="1"/></svg>
<div style="left:1202.80px;top:701.74px;font-size:10px;line-height:12px;color:#444;font-weight:normal;font-style:normal;white-space:nowrap;transform-origin:0 0;transform:scaleX(0.7246);">SQL</div>
<div style="left:1229px;top:698px;width:38px;height:22px;background:#c8c8c8;"></div>
<svg style="left:1240px;top:701px;" width="16" height="15" viewBox="0 0 16 15"><path d="M1.5 1.5v7h6z" fill="none" stroke="#555" stroke-width="1.1"/><path d="M1.5 5.5h2v3" fill="none" stroke="#555" stroke-width="0.9"/><path d="M5.5 8.5l7.5-7 1.8 1.8-7.5 7-2.4 0.6z" fill="none" stroke="#555" stroke-width="1.1"/><rect x="1.5" y="10.5" width="13" height="3.5" fill="none" stroke="#555" stroke-width="1.1"/><path d="M4 10.5v1.5M6.5 10.5v1.5M9 10.5v1.5M11.5 10.5v1.5" stroke="#555" stroke-width="0.9"/></svg>
</body></html>
